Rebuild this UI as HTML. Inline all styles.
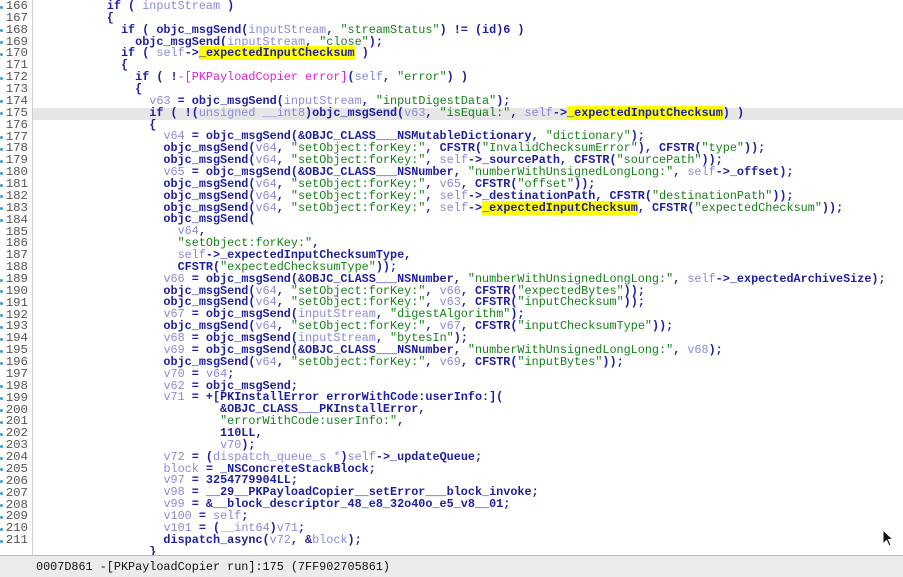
<!DOCTYPE html>
<html><head><meta charset="utf-8"><style>
html,body{margin:0;padding:0;width:903px;height:576px;overflow:hidden;background:#fff;}
body{font-family:"Liberation Mono",monospace;font-size:11.8px;}
#gut{position:absolute;left:0;top:0;width:32px;height:555px;background:#fff;border-right:1px solid #d0d0d0;}
.ln{position:absolute;left:0;width:28px;text-align:right;color:#555;height:11.87px;line-height:11.87px;font-size:12.4px;}
.dot{position:absolute;left:0;width:3px;height:3px;border-radius:50%;background:#3a9ad8;}
#code{position:absolute;left:36px;top:1px;right:0;}
.l{height:11.87px;line-height:11.87px;white-space:pre;color:#1e1ea0;font-weight:bold;}
.v{color:#8a8ad8;font-weight:normal;}
.s{color:#16801a;font-weight:normal;}
.m{color:#e020d0;font-weight:normal;}
.h{background:#ffff00;}
#hl{position:absolute;left:33px;top:108px;width:870px;height:12px;background:#e6e6e6;}
#status{position:absolute;left:0;top:555px;width:903px;height:21px;background:#ececec;border-top:1px solid #bbb;}
#status span{position:absolute;left:36px;top:4px;font-size:11.8px;color:#111;white-space:pre;}
</style></head><body>
<div id="hl"></div>
<div id="gut"></div>
<div id="nums"></div>
<div id="code">
<div class="l">          if ( <span class="v">inputStream</span> )</div>
<div class="l">          {</div>
<div class="l">            if ( objc_msgSend(<span class="v">inputStream</span>, <span class="s">"streamStatus"</span>) != (id)6 )</div>
<div class="l">              objc_msgSend(<span class="v">inputStream</span>, <span class="s">"close"</span>);</div>
<div class="l">            if ( <span class="v">self</span>-><span class="h">_expectedInputChecksum</span> )</div>
<div class="l">            {</div>
<div class="l">              if ( !<span class="m">-[PKPayloadCopier error]</span>(<span class="v">self</span>, <span class="s">"error"</span>) )</div>
<div class="l">              {</div>
<div class="l">                <span class="v">v63</span> = objc_msgSend(<span class="v">inputStream</span>, <span class="s">"inputDigestData"</span>);</div>
<div class="l">                if ( !(<span class="v">unsigned __int8</span>)objc_msgSend(<span class="v">v63</span>, <span class="s">"isEqual:"</span>, <span class="v">self</span>-><span class="h">_expectedInputChecksum</span>) )</div>
<div class="l">                {</div>
<div class="l">                  <span class="v">v64</span> = objc_msgSend(&amp;OBJC_CLASS___NSMutableDictionary, <span class="s">"dictionary"</span>);</div>
<div class="l">                  objc_msgSend(<span class="v">v64</span>, <span class="s">"setObject:forKey:"</span>, CFSTR(<span class="s">"InvalidChecksumError"</span>), CFSTR(<span class="s">"type"</span>));</div>
<div class="l">                  objc_msgSend(<span class="v">v64</span>, <span class="s">"setObject:forKey:"</span>, <span class="v">self</span>->_sourcePath, CFSTR(<span class="s">"sourcePath"</span>));</div>
<div class="l">                  <span class="v">v65</span> = objc_msgSend(&amp;OBJC_CLASS___NSNumber, <span class="s">"numberWithUnsignedLongLong:"</span>, <span class="v">self</span>->_offset);</div>
<div class="l">                  objc_msgSend(<span class="v">v64</span>, <span class="s">"setObject:forKey:"</span>, <span class="v">v65</span>, CFSTR(<span class="s">"offset"</span>));</div>
<div class="l">                  objc_msgSend(<span class="v">v64</span>, <span class="s">"setObject:forKey:"</span>, <span class="v">self</span>->_destinationPath, CFSTR(<span class="s">"destinationPath"</span>));</div>
<div class="l">                  objc_msgSend(<span class="v">v64</span>, <span class="s">"setObject:forKey:"</span>, <span class="v">self</span>-><span class="h">_expectedInputChecksum</span>, CFSTR(<span class="s">"expectedChecksum"</span>));</div>
<div class="l">                  objc_msgSend(</div>
<div class="l">                    <span class="v">v64</span>,</div>
<div class="l">                    <span class="s">"setObject:forKey:"</span>,</div>
<div class="l">                    <span class="v">self</span>->_expectedInputChecksumType,</div>
<div class="l">                    CFSTR(<span class="s">"expectedChecksumType"</span>));</div>
<div class="l">                  <span class="v">v66</span> = objc_msgSend(&amp;OBJC_CLASS___NSNumber, <span class="s">"numberWithUnsignedLongLong:"</span>, <span class="v">self</span>->_expectedArchiveSize);</div>
<div class="l">                  objc_msgSend(<span class="v">v64</span>, <span class="s">"setObject:forKey:"</span>, <span class="v">v66</span>, CFSTR(<span class="s">"expectedBytes"</span>));</div>
<div class="l">                  objc_msgSend(<span class="v">v64</span>, <span class="s">"setObject:forKey:"</span>, <span class="v">v63</span>, CFSTR(<span class="s">"inputChecksum"</span>));</div>
<div class="l">                  <span class="v">v67</span> = objc_msgSend(<span class="v">inputStream</span>, <span class="s">"digestAlgorithm"</span>);</div>
<div class="l">                  objc_msgSend(<span class="v">v64</span>, <span class="s">"setObject:forKey:"</span>, <span class="v">v67</span>, CFSTR(<span class="s">"inputChecksumType"</span>));</div>
<div class="l">                  <span class="v">v68</span> = objc_msgSend(<span class="v">inputStream</span>, <span class="s">"bytesIn"</span>);</div>
<div class="l">                  <span class="v">v69</span> = objc_msgSend(&amp;OBJC_CLASS___NSNumber, <span class="s">"numberWithUnsignedLongLong:"</span>, <span class="v">v68</span>);</div>
<div class="l">                  objc_msgSend(<span class="v">v64</span>, <span class="s">"setObject:forKey:"</span>, <span class="v">v69</span>, CFSTR(<span class="s">"inputBytes"</span>));</div>
<div class="l">                  <span class="v">v70</span> = <span class="v">v64</span>;</div>
<div class="l">                  <span class="v">v62</span> = objc_msgSend;</div>
<div class="l">                  <span class="v">v71</span> = +[PKInstallError errorWithCode:userInfo:](</div>
<div class="l">                          &amp;OBJC_CLASS___PKInstallError,</div>
<div class="l">                          <span class="s">"errorWithCode:userInfo:"</span>,</div>
<div class="l">                          110LL,</div>
<div class="l">                          <span class="v">v70</span>);</div>
<div class="l">                  <span class="v">v72</span> = (<span class="v">dispatch_queue_s *</span>)<span class="v">self</span>->_updateQueue;</div>
<div class="l">                  <span class="v">block</span> = _NSConcreteStackBlock;</div>
<div class="l">                  <span class="v">v97</span> = 3254779904LL;</div>
<div class="l">                  <span class="v">v98</span> = __29__PKPayloadCopier__setError___block_invoke;</div>
<div class="l">                  <span class="v">v99</span> = &amp;__block_descriptor_48_e8_32o40o_e5_v8__01;</div>
<div class="l">                  <span class="v">v100</span> = <span class="v">self</span>;</div>
<div class="l">                  <span class="v">v101</span> = (<span class="v">__int64</span>)<span class="v">v71</span>;</div>
<div class="l">                  dispatch_async(<span class="v">v72</span>, &amp;<span class="v">block</span>);</div>
<div class="l">                }</div>
</div>
<div id="status"><span>0007D861 -[PKPayloadCopier run]:175 (7FF902705861)</span></div>
<svg style="position:absolute;left:882px;top:529px" width="14" height="20" viewBox="0 0 14 20"><path d="M1 1 L1 15 L4.5 11.5 L7 17 L9 16 L6.5 10.5 L11 10.5 Z" fill="#111" stroke="#fff" stroke-width="1"/></svg>
<script>
var n=document.getElementById('nums'),h='';
for(var i=166;i<=211;i++){var y=1+(i-166)*11.87;
h+='<div class="ln" style="top:'+y+'px">'+i+'</div>';
if([167,171,173,176,185,186,187,188,197].indexOf(i)<0)h+='<div class="dot" style="top:'+(y+4.5)+'px"></div>';}
n.innerHTML=h;
</script>
</body></html>
